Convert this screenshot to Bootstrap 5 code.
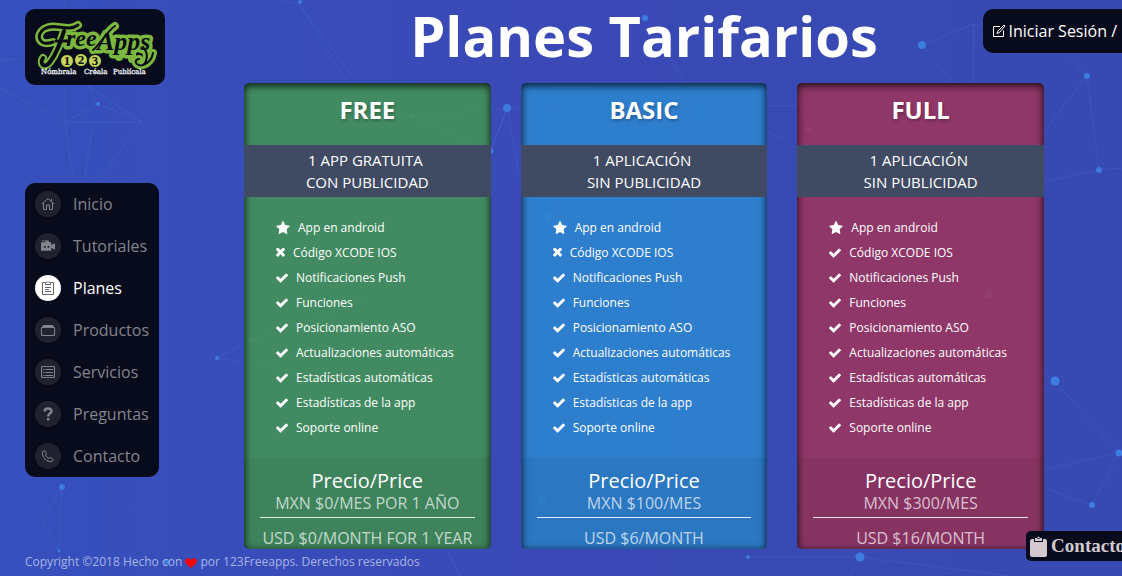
<!DOCTYPE html>
<html lang="es">
<head>
<meta charset="utf-8">
<meta name="viewport" content="width=device-width, initial-scale=1">
<title>Planes Tarifarios</title>
<link href="https://cdn.jsdelivr.net/npm/bootstrap@5.3.0/dist/css/bootstrap.min.css" rel="stylesheet">
<style>
  body { font-family: "Open Sans", "Noto Sans", sans-serif; background: linear-gradient(90deg, #3650bd, #3a49b6 50%, #364ab1); color: #fff; overflow-x: hidden; }
  .net { position: absolute; inset: 0; width: 100%; height: 100%; }
  .net g { stroke: #4f74dc; stroke-opacity: .28; fill: none; }
  .net circle { fill: #3d7ce0; stroke: none; }
  .panel-dark { background: #070b1b; border-radius: 10px; }
  .side { width: 244px; padding: 9px 0 0 25px; }
  .logo-box { width: 140px; height: 76px; }
  .side-nav { width: 134px; margin-top: 98px; }
  .side-nav a { height: 42px; padding-left: 10px; gap: 12px; font-size: 16px; color: #83858d; text-decoration: none; }
  .side-nav a.active { color: #fff; }
  .dot { width: 26px; height: 26px; border-radius: 50%; background: #20232f; color: #83858d; }
  .active .dot { background: #fff; color: #666; }
  .dot svg { width: 14px; height: 14px; }
  .plans { padding-right: 78px; }
  .plans h1 { font-size: 56px; line-height: 70px; height: 83px; font-weight: 700; margin: 0; }
  .plans .row { --bs-gutter-x: 30px; }
  .plan { border-radius: 5px; box-shadow: inset 0 2px 7px 1px rgba(0,0,0,.75); padding-bottom: 1px; }
  .plan-free { background: rgba(68,151,82,.85); }
  .plan-basic { background: rgba(45,134,209,.87); }
  .plan-full { background: rgba(159,52,91,.85); }
  .plan h2 { height: 62px; line-height: 54px; font-size: 24px; font-weight: 700; margin: 0; text-shadow: 1px 2px 3px rgba(0,0,0,.25); }
  .plan-band { background: #404b63; height: 52px; padding-top: 4px; font-size: 15px; line-height: 22px; margin: 0; }
  .plan ul { padding: 18px 0 18px 32px; margin: 0; height: 261px; font-size: 12px; }
  .plan li { height: 25px; gap: 8px; }
  .plan li svg { height: 12px; width: 12px; fill: #fff; }
  .plan li svg.i-star { width: 14px; height: 13px; }
  .plan li svg.i-x { width: 9px; height: 9px; }
  .price { background: rgba(0,0,0,.055); height: 90px; padding: 12px 16px 0; font-size: 16px; line-height: 22px; }
  .price h3 { font-size: 20px; line-height: 22px; margin: 0; font-weight: 400; }
  .price p { margin: 0; color: rgba(255,255,255,.7); white-space: nowrap; }
  .price p + p { border-top: 1px solid rgba(255,255,255,.85); margin-top: 3px; padding-top: 9px; }
  .foot { font-size: 12px; line-height: 18px; padding: 4px 0 5px 25px; color: #a9b3e6; }
  .foot svg { width: 12px; height: 10px; fill: #f00; }
  .login { position: absolute; top: 9px; right: 0; height: 44px; padding: 0 5px 0 9px; gap: 3px; font-size: 16px; color: #fff; text-decoration: none; border-radius: 10px 0 0 10px; white-space: nowrap; }
  .login svg { width: 14px; height: 14px; }
  .contact { position: fixed; bottom: 15px; right: -9px; height: 30px; padding: 0 6px 0 4px; gap: 4px; border: 0; border-radius: 5px; background: #070b1b; color: #d3c9cf; font: 700 19px "Liberation Serif", serif; white-space: nowrap; }
  .contact svg { width: 17px; height: 21px; }
</style>
</head>
<body class="min-vh-100 d-flex flex-column position-relative">
<svg width="0" height="0" class="position-absolute" aria-hidden="true">
  <symbol id="check" viewBox="121 300 1550 1250"><path d="M1671 566q0 40-28 68l-724 724-136 136q-28 28-68 28t-68-28l-136-136-362-362q-28-28-28-68t28-68l136-136q28-28 68-28t68 28l294 295 656-657q28-28 68-28t68 28l136 136q28 28 28 68z"/></symbol>
  <symbol id="cross" viewBox="302 410 1188 1188"><path d="M1490 1322q0 40-28 68l-136 136q-28 28-68 28t-68-28l-294-294-294 294q-28 28-68 28t-68-28l-136-136q-28-28-28-68t28-68l294-294-294-294q-28-28-28-68t28-68l136-136q28-28 68-28t68 28l294 294 294-294q28-28 68-28t68 28l136 136q28 28 28 68t-28 68l-294 294 294 294q28 28 28 68z"/></symbol>
  <symbol id="star" viewBox="64 32 1664 1590"><path d="M1728 647q0 22-26 48l-363 354 86 500q1 7 1 20 0 21-10.5 35.5t-30.5 14.5q-19 0-40-12l-449-236-449 236q-22 12-40 12-21 0-31.5-14.5t-10.5-35.5q0-6 2-20l86-500-364-354q-25-27-25-48 0-37 56-46l502-73 225-455q19-41 49-41t49 41l225 455 502 73q56 9 56 46z"/></symbol>
</svg>

<svg class="net" viewBox="0 0 1122 576" preserveAspectRatio="xMidYMid slice" aria-hidden="true">
  <g>
    <path d="M65 0V122H142L98 104 65 122 0 88M98 104 88 86 142 122 100 178M65 122 73 178M0 60 65 55M92 128 85 178M282 0 300 5 370 100 411 116 560 105M300 5 345 80M411 116 491 151 507 108 480 180M217 358 250 340 370 300M217 358 300 372M62 487 42 520 59 551ZM507 108 520 180 560 210M645 17 702 112 790 140M922 45 974 24 1040 50M922 45 955 85 1010 170M974 24 972 150M1060 45 1087 76 1099 170 1122 168M1099 170 1000 190 860 240M1087 76 1030 150M808 129 800 106 720 105M808 129 853 198 870 260M989 294 870 270 930 330 989 294 1000 200M989 294 1002 344 1055 381 968 424 995 470 1092 505 1119 453 1055 381M1119 453 995 480 900 410M860 557 835 545M860 557 850 576M860 557 749 557M860 557 1010 576M447 549 460 576M752 331 733 290 700 340ZM548 217 590 260"/>
    <g class="nodes">
    <circle cx="98" cy="104" r="2"/><circle cx="62" cy="487" r="3"/><circle cx="59" cy="551" r="1.5"/><circle cx="167" cy="562" r="3"/><circle cx="217" cy="358" r="2"/><circle cx="250" cy="340" r="2"/><circle cx="300" cy="2" r="2"/><circle cx="411" cy="116" r="2"/><circle cx="491" cy="151" r="2.5"/><circle cx="507" cy="108" r="4"/><circle cx="645" cy="18" r="3"/><circle cx="702" cy="112" r="2"/><circle cx="547" cy="217" r="3"/><circle cx="542" cy="499" r="4"/><circle cx="752" cy="331" r="2"/><circle cx="748" cy="557" r="2"/><circle cx="922" cy="45" r="4"/><circle cx="1087" cy="76" r="3"/><circle cx="1099" cy="170" r="3"/><circle cx="808" cy="129" r="3"/><circle cx="989" cy="294" r="4"/><circle cx="968" cy="424" r="2"/><circle cx="1055" cy="381" r="4.500"/><circle cx="1119" cy="453" r="3.500"/><circle cx="1092" cy="505" r="3"/><circle cx="860" cy="557" r="4.500"/>
    </g>
  </g>
</svg>

<div class="d-flex position-relative">
  <aside class="side flex-shrink-0">
    <a href="#" class="logo-box panel-dark d-block" aria-label="FreeApps 123">
      <svg width="140" height="76" viewBox="0 0 140 76" aria-hidden="true">
        <g fill="none" stroke="#7cb83f" stroke-width="8" stroke-linecap="round" stroke-linejoin="round">
          <path d="M28 33C14 38 10 26 19 20 30 13 42 24 53 16M39 22C35 34 32 44 25 53 20 60 14 55 18 49"/>
          <path d="M68 41C74 37 82 22 90 17M118 38C126 47 120 61 112 55 109 52 112 50 114 50M118 56C124 54 127 50 128 44"/>
          <path d="M94 36V48M107 38V50"/>
        </g>
        <g font-family="Liberation Serif, serif" font-style="italic" font-weight="700" stroke="#7cb83f" stroke-width="7" stroke-linejoin="round" fill="#080c12" paint-order="stroke">
          <text x="41" y="37" font-size="24">ree</text>
          <text x="72" y="41" font-size="26">Apps</text>
        </g>
        <g fill="none" stroke="#080c12" stroke-width="3" stroke-linecap="round">
          <path d="M28 33C14 38 10 26 19 20 30 13 42 24 53 16M31 32H42"/>
          <path d="M39 22C35 34 32 44 25 53 20 60 14 55 18 49" stroke-width="4"/>
          <path d="M68 41C74 37 82 22 90 17M118 38C126 47 120 61 112 55 109 52 112 50 114 50M118 56C124 54 127 50 128 44" stroke-width="2"/>
        </g>
        <g fill="#c3d45c" stroke="#080c12"><circle cx="42" cy="52" r="6.500"/><circle cx="56" cy="51" r="6.500"/><circle cx="70" cy="52" r="6.500"/></g>
        <g font-family="Liberation Serif, serif" font-weight="700" font-size="13" fill="#080c12" text-anchor="middle"><text x="42" y="56">1</text><text x="56" y="55">2</text><text x="70" y="56">3</text></g>
        <g font-family="DejaVu Serif, serif" font-size="7" fill="#f0f1f6" stroke="#f0f1f6" stroke-width=".3"><text x="16" y="65">Nómbrala</text><text x="59" y="65">Créala</text><text x="88" y="65">Publícala</text></g>
      </svg>
    </a>
    <nav class="side-nav panel-dark" aria-label="Principal">
      <a href="#" class="d-flex align-items-center"><span class="dot d-flex align-items-center justify-content-center"><svg viewBox="0 0 14 14" fill="none" stroke="currentColor"><path d="M1 7 7 1.500 13 7M2.500 6V12.500H5.500V8H8.500V12.500H11.500V6M10.500 4.500V2"/></svg></span>Inicio</a>
      <a href="#" class="d-flex align-items-center"><span class="dot d-flex align-items-center justify-content-center"><svg viewBox="0 0 15 14" fill="currentColor"><path fill-rule="evenodd" d="M1 1H8L9 3H11V6L15 4V11L11 9V12H0V3H5V2H1ZM3 7V9H5V7ZM7 7V9H9V7Z"/></svg></span>Tutoriales</a>
      <a href="#" class="active d-flex align-items-center" aria-current="page"><span class="dot d-flex align-items-center justify-content-center"><svg viewBox="0 0 14 14" fill="none" stroke="currentColor"><path d="M4 1.500H1.500V13.500H12.500V1.500H10M4.500 3.500V1.500H6L7 .500 8 1.500H9.500V3.500ZM4 6.500H10M4 8.500H8M4 10.500H10"/></svg></span>Planes</a>
      <a href="#" class="d-flex align-items-center"><span class="dot d-flex align-items-center justify-content-center"><svg viewBox="0 0 14 14" fill="none" stroke="currentColor"><path d="M.500 4.500H13.500V12.500H.500ZM1.500 3.500H12.500M2 2.500H12"/></svg></span>Productos</a>
      <a href="#" class="d-flex align-items-center"><span class="dot d-flex align-items-center justify-content-center"><svg viewBox="0 0 14 14" fill="none" stroke="currentColor"><path d="M.500 1.500H13.500V12.500H.500ZM2 4.500H3.500M4.500 4.500H12M2 7.500H3.500M4.500 7.500H12M2 10.500H3.500M4.500 10.500H12"/></svg></span>Servicios</a>
      <a href="#" class="d-flex align-items-center"><span class="dot d-flex align-items-center justify-content-center"><svg viewBox="0 0 14 14" fill="none" stroke="currentColor" stroke-width="2.500"><path d="M3.500 4.500C4 0 11 1 10.500 4.500 10 6.500 7.200 6.500 7.200 9.500M7.200 11V13.500"/></svg></span>Preguntas</a>
      <a href="#" class="d-flex align-items-center"><span class="dot d-flex align-items-center justify-content-center"><svg viewBox="0 0 14 14" fill="none" stroke="currentColor"><path d="M1.500 3 3 1.500 5.500 4.500 4.500 6C5 7.500 6.500 9 8 9.500L9.500 8.500 12.500 11 11 12.500C6 13.500.500 8 1.500 3Z"/></svg></span>Contacto</a>
    </nav>
  </aside>

  <main class="plans flex-grow-1 text-center">
    <h1>Planes Tarifarios</h1>
    <div class="row">
      <div class="col-4"><section class="plan plan-free">
        <h2>FREE</h2>
        <p class="plan-band">1 APP GRATUITA&nbsp;<br>CON PUBLICIDAD</p>
        <ul class="list-unstyled">
          <li class="d-flex align-items-center"><svg class="i-star"><use href="#star"/></svg>App en android</li>
          <li class="d-flex align-items-center"><svg class="i-x"><use href="#cross"/></svg>Código XCODE IOS</li>
          <li class="d-flex align-items-center"><svg><use href="#check"/></svg>Notificaciones Push</li>
          <li class="d-flex align-items-center"><svg><use href="#check"/></svg>Funciones</li>
          <li class="d-flex align-items-center"><svg><use href="#check"/></svg>Posicionamiento ASO</li>
          <li class="d-flex align-items-center"><svg><use href="#check"/></svg>Actualizaciones automáticas</li>
          <li class="d-flex align-items-center"><svg><use href="#check"/></svg>Estadísticas automáticas</li>
          <li class="d-flex align-items-center"><svg><use href="#check"/></svg>Estadísticas de la app</li>
          <li class="d-flex align-items-center"><svg><use href="#check"/></svg>Soporte online</li>
        </ul>
        <div class="price"><h3>Precio/Price</h3><p>MXN $0/MES POR 1 AÑO</p><p>USD $0/MONTH FOR 1 YEAR</p></div>
      </section></div>
      <div class="col-4"><section class="plan plan-basic">
        <h2>BASIC</h2>
        <p class="plan-band">1 APLICACIÓN&nbsp;<br>SIN PUBLICIDAD</p>
        <ul class="list-unstyled">
          <li class="d-flex align-items-center"><svg class="i-star"><use href="#star"/></svg>App en android</li>
          <li class="d-flex align-items-center"><svg class="i-x"><use href="#cross"/></svg>Código XCODE IOS</li>
          <li class="d-flex align-items-center"><svg><use href="#check"/></svg>Notificaciones Push</li>
          <li class="d-flex align-items-center"><svg><use href="#check"/></svg>Funciones</li>
          <li class="d-flex align-items-center"><svg><use href="#check"/></svg>Posicionamiento ASO</li>
          <li class="d-flex align-items-center"><svg><use href="#check"/></svg>Actualizaciones automáticas</li>
          <li class="d-flex align-items-center"><svg><use href="#check"/></svg>Estadísticas automáticas</li>
          <li class="d-flex align-items-center"><svg><use href="#check"/></svg>Estadísticas de la app</li>
          <li class="d-flex align-items-center"><svg><use href="#check"/></svg>Soporte online</li>
        </ul>
        <div class="price"><h3>Precio/Price</h3><p>MXN $100/MES</p><p>USD $6/MONTH</p></div>
      </section></div>
      <div class="col-4"><section class="plan plan-full">
        <h2>FULL</h2>
        <p class="plan-band">1 APLICACIÓN&nbsp;<br>SIN PUBLICIDAD</p>
        <ul class="list-unstyled">
          <li class="d-flex align-items-center"><svg class="i-star"><use href="#star"/></svg>App en android</li>
          <li class="d-flex align-items-center"><svg><use href="#check"/></svg>Código XCODE IOS</li>
          <li class="d-flex align-items-center"><svg><use href="#check"/></svg>Notificaciones Push</li>
          <li class="d-flex align-items-center"><svg><use href="#check"/></svg>Funciones</li>
          <li class="d-flex align-items-center"><svg><use href="#check"/></svg>Posicionamiento ASO</li>
          <li class="d-flex align-items-center"><svg><use href="#check"/></svg>Actualizaciones automáticas</li>
          <li class="d-flex align-items-center"><svg><use href="#check"/></svg>Estadísticas automáticas</li>
          <li class="d-flex align-items-center"><svg><use href="#check"/></svg>Estadísticas de la app</li>
          <li class="d-flex align-items-center"><svg><use href="#check"/></svg>Soporte online</li>
        </ul>
        <div class="price"><h3>Precio/Price</h3><p>MXN $300/MES</p><p>USD $16/MONTH</p></div>
      </section></div>
    </div>
  </main>
</div>

<footer class="foot position-relative">Copyright ©2018 Hecho con <svg viewBox="0 0 12 10" role="img" aria-label="amor"><path d="M6 10C3 7 0 5.500 0 3 0 0 4-1 6 2 8-1 12 0 12 3 12 5.500 9 7 6 10Z"/></svg> por 123Freeapps. Derechos reservados</footer>

<a href="#" class="login panel-dark d-flex align-items-center"><svg viewBox="0 0 14 14" fill="none" stroke="currentColor"><path d="M8 2.500H1.500V12.500H11.500V6.500M5 9.500 6 7 12 1 13 2 7.500 8.500Z"/></svg>Iniciar Sesión /</a>
<button type="button" class="contact d-flex align-items-center"><svg viewBox="0 0 17 21" fill="currentColor"><path fill-rule="evenodd" d="M2 3H4V6H13V3H15Q17 3 17 5V19Q17 21 15 21H2Q0 21 0 19V5Q0 3 2 3ZM5 5V2H7Q8.500-1 10 2H12V5ZM7.500 2V3H9.500V2Z"/></svg>Contacto</button>
<script src="https://cdn.jsdelivr.net/npm/bootstrap@5.3.0/dist/js/bootstrap.bundle.min.js"></script>
</body>
</html>
